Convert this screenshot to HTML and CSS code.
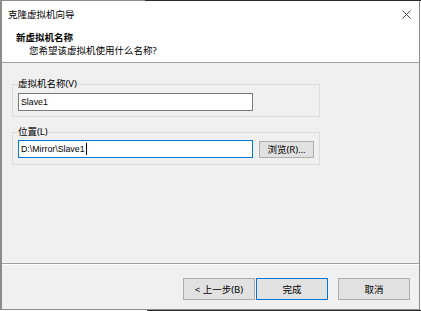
FILE: index.html
```html
<!DOCTYPE html>
<html>
<head>
<meta charset="utf-8">
<link rel="stylesheet" href="styles.css">
</head>
<body>
<div class="edge top"></div>
<div class="window">
  <div class="titlebar">
    <span class="title">克隆虚拟机向导</span>
    <svg class="close" width="10" height="10" viewBox="0 0 10 10"><path d="M0.5 0.5 L9.5 9.5 M9.5 0.5 L0.5 9.5" stroke="#333" stroke-width="1" fill="none"/></svg>
  </div>
  <div class="header">
    <div class="h-title">新虚拟机名称</div>
    <div class="h-sub">您希望该虚拟机使用什么名称?</div>
  </div>
  <div class="content">
    <fieldset class="group g1">
      <legend>虚拟机名称(V)</legend>
      <div class="field">Slave1</div>
    </fieldset>
    <fieldset class="group g2">
      <legend>位置(L)</legend>
      <div class="row">
        <div class="field focused">D:\Mirror\Slave1<span class="caret"></span></div>
        <div class="btn small">浏览(R)...</div>
      </div>
    </fieldset>
  </div>
  <div class="footer">
    <div class="btn">&lt; 上一步(B)</div>
    <div class="btn default">完成</div>
    <div class="btn cancel">取消</div>
  </div>
</div>
<div class="edge bottom"></div>
</body>
</html>
```
FILE: styles.css
```css
html, body {
  margin: 0;
  padding: 0;
  background: #ffffff;
}
body {
  font-family: "Noto Sans", "Noto Sans CJK SC", sans-serif;
  font-size: 9.5px;
  color: #000;
}
.edge {
  height: 1px;
  width: 421px;
}
.edge.top {
  background: linear-gradient(to right, #8c8c8c 0, #8c8c8c 145px, #2b2b2b 145px, #2b2b2b 100%);
}
.edge.bottom {
  background: linear-gradient(to right, #ffffff 0, #ffffff 147px, #2b2b2b 147px, #2b2b2b 100%);
}
.window {
  width: 420px;
  height: 309px;
  box-sizing: border-box;
  border: 1px solid #8c8c8c;
  border-top: none;
  border-left-width: 2px;
  display: flex;
  flex-direction: column;
  background: #f0f0f0;
}
.titlebar {
  height: 27px;
  background: #fff;
  display: flex;
  align-items: center;
  justify-content: space-between;
  padding: 0 8px 0 6px;
}
.title {
  line-height: 13px;
}
.close {
  display: block;
  width: 9px;
  height: 9px;
  margin-top: -1px;
}
.header {
  background: #fff;
  padding: 3px 0 5px 14px;
  border-bottom: 1px solid #a0a0a0;
}
.h-title {
  font-weight: bold;
  line-height: 13px;
}
.h-sub {
  line-height: 13px;
  padding-left: 13px;
}
.content {
  flex: 1;
  padding: 14px 0 0 10px;
  border-bottom: 1px solid #a0a0a0;
}
.group {
  margin: 0;
  width: 308px;
  box-sizing: border-box;
  border: 1px solid #dcdcdc;
  padding: 0 5px 5px 5px;
  min-width: 0;
}
.group legend {
  padding: 0;
  line-height: 14px;
}
.g1 .field {
  margin-top: 2px;
}
.g2 {
  margin-top: 8px;
  padding-bottom: 6px;
}
.g2 .row {
  margin-top: 1px;
  display: flex;
  align-items: center;
}
.field {
  width: 235px;
  height: 18px;
  box-sizing: border-box;
  border: 1px solid #7a7a7a;
  background: #fff;
  padding-left: 2px;
  line-height: 16px;
  font-family: "Liberation Sans", sans-serif;
  font-size: 8.8px;
  display: flex;
  align-items: center;
}
.field.focused {
  border-color: #0078d7;
}
.caret {
  display: inline-block;
  width: 1px;
  height: 12px;
  background: #000;
  margin-left: 1px;
}
.btn {
  width: 72px;
  height: 22px;
  box-sizing: border-box;
  background: #e1e1e1;
  border: 1px solid #adadad;
  display: flex;
  align-items: center;
  justify-content: center;
  line-height: 13px;
}
.btn.small {
  width: 55px;
  height: 17px;
  margin-left: 6px;
}
.btn.default {
  border-color: #0078d7;
  margin-left: 1px;
}
.btn.cancel {
  margin-left: 10px;
}
.footer {
  border-top: 1px solid #ffffff;
  height: 45px;
  box-sizing: border-box;
  padding: 13px 9px 0 0;
  display: flex;
  justify-content: flex-end;
  align-items: flex-start;
}
```
